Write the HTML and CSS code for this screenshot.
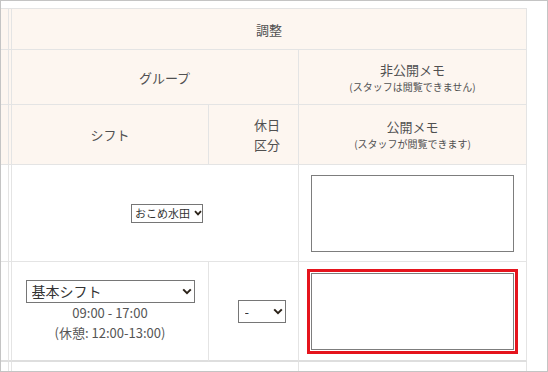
FILE: index.html
```html
<html>
<head>
	<meta charset="UTF-8">
	<link rel="stylesheet" href="styles.css">
</head>
<body>
	<div class="sheet">
		<table class="shift-table">
			<colgroup>
				<col class="col-stub">
				<col class="col-gap">
				<col class="col-shift">
				<col class="col-holiday">
				<col class="col-memo">
			</colgroup>
			<thead>
				<tr class="row-adjust">
					<th></th>
					<th></th>
					<th colspan="3">調整</th>
				</tr>
				<tr class="row-group">
					<th></th>
					<th></th>
					<th colspan="2" class="cell-group">グループ</th>
					<th>非公開メモ<span class="note">(スタッフは閲覧できません)</span></th>
				</tr>
				<tr class="row-shift">
					<th></th>
					<th></th>
					<th>シフト</th>
					<th class="cell-holiday">休日<br>区分</th>
					<th>公開メモ<span class="note">(スタッフが閲覧できます)</span></th>
				</tr>
			</thead>
			<tbody>
				<tr class="row-member">
					<td></td>
					<td></td>
					<td colspan="2" class="cell-group">
						<span class="select select-group">
							<select>
								<option>おこめ水田</option>
							</select>
							<svg class="select-arrow" width="8" height="6" viewBox="0 0 8 6"><path d="M1 1.2 L4 4.4 L7 1.2" fill="none" stroke="#2b2218" stroke-width="1.8"/></svg>
						</span>
					</td>
					<td class="cell-memo">
						<textarea class="memo-input"></textarea>
					</td>
				</tr>
				<tr class="row-day">
					<td></td>
					<td></td>
					<td class="cell-shift">
						<span class="select select-shift">
							<select>
								<option>基本シフト</option>
							</select>
							<svg class="select-arrow" width="10" height="7" viewBox="0 0 10 7"><path d="M1.2 1.4 L5 5.2 L8.8 1.4" fill="none" stroke="#2b2218" stroke-width="2"/></svg>
						</span>
						<div class="shift-time">09:00 - 17:00</div>
						<div class="shift-time">(休憩: 12:00-13:00)</div>
					</td>
					<td class="cell-holiday">
						<span class="select select-holiday">
							<select>
								<option>-</option>
							</select>
							<svg class="select-arrow" width="10" height="7" viewBox="0 0 10 7"><path d="M1.2 1.4 L5 5.2 L8.8 1.4" fill="none" stroke="#2b2218" stroke-width="2"/></svg>
						</span>
					</td>
					<td class="cell-memo">
						<textarea class="memo-input is-active"></textarea>
					</td>
				</tr>
				<tr class="row-next">
					<td></td>
					<td></td>
					<td colspan="2"></td>
					<td></td>
				</tr>
			</tbody>
		</table>
	</div>
</body>
</html>
```

FILE: styles.css
```css
body {
	margin: 0;
	font-family: "Noto Sans CJK JP", "Noto Sans", sans-serif;
	color: #555;
}
.sheet {
	width: 548px;
	height: 372px;
	box-sizing: border-box;
	border: 1px solid #c4c4c4;
	padding-top: 7px;
	overflow: hidden;
	background: #fff;
}
.shift-table {
	width: 558px;
	margin-left: -32px;
	table-layout: fixed;
	border-collapse: separate;
	border-spacing: 0;
	border-top: 1px solid #e4e4e4;
}
.col-stub { width: 40px; }
.col-gap { width: 3px; }
.col-shift { width: 197px; }
.col-holiday { width: 90px; }
.col-memo { width: 228px; }

.shift-table th,
.shift-table td {
	box-sizing: border-box;
	padding: 0;
	border-right: 1px solid #e4e4e4;
	border-bottom: 1px solid #e4e4e4;
	text-align: center;
	vertical-align: middle;
}
.shift-table th {
	background-color: #fdf6f0;
	font-size: 13px;
	font-weight: normal;
	line-height: 19px;
	color: #505050;
}
.shift-table th .note {
	display: block;
	font-size: 10px;
	line-height: 16px;
}
.row-adjust { height: 41px; }
.row-group { height: 55px; }
.row-shift { height: 60px; }
.row-member { height: 97px; }
.row-day { height: 100px; }
.row-next { height: 30px; }

.shift-table .row-shift .cell-holiday {
	padding-left: 27px;
	line-height: 20px;
}
.shift-table .row-group .cell-group {
	padding-left: 19px;
}
.shift-table .row-member .cell-group {
	padding-left: 24px;
}
.shift-table .row-day td {
	border-bottom: 2px solid #dedede;
}
.shift-table .row-day .cell-holiday {
	padding-left: 16px;
}
.shift-table .cell-memo {
	padding: 0 12px;
}

.select {
	position: relative;
	display: inline-block;
	vertical-align: middle;
	line-height: 0;
}
.select select {
	appearance: none;
	-webkit-appearance: none;
	box-sizing: border-box;
	margin: 0;
	border: 1px solid #767676;
	border-radius: 0;
	background: #fff;
	color: #333;
	font-family: "Noto Sans CJK JP", "Noto Sans", sans-serif;
}
.select-arrow {
	position: absolute;
	top: 50%;
	pointer-events: none;
}
.select-group select {
	width: 72px;
	height: 19px;
	padding: 0 10px 0 3px;
	font-size: 11px;
}
.select-group .select-arrow {
	right: 1px;
	margin-top: -3px;
}
.select-shift {
	display: block;
	width: 169px;
	margin: 0 auto;
}
.select-shift select {
	width: 169px;
	height: 23px;
	padding: 0 20px 0 5px;
	font-size: 14px;
}
.select-shift .select-arrow,
.select-holiday .select-arrow {
	right: 3px;
	margin-top: -3px;
}
.select-holiday select {
	width: 48px;
	height: 23px;
	padding: 0 16px 0 6px;
	font-size: 13px;
}
.shift-time {
	font-size: 13px;
	line-height: 20px;
	color: #555;
}

.memo-input {
	display: block;
	box-sizing: border-box;
	width: 203px;
	height: 77px;
	margin: 0;
	border: 1px solid #7d7d7d;
	border-radius: 0;
	resize: none;
	background: #fff;
}
.memo-input.is-active {
	outline: 3px solid #e5141d;
	outline-offset: 1px;
}
```
